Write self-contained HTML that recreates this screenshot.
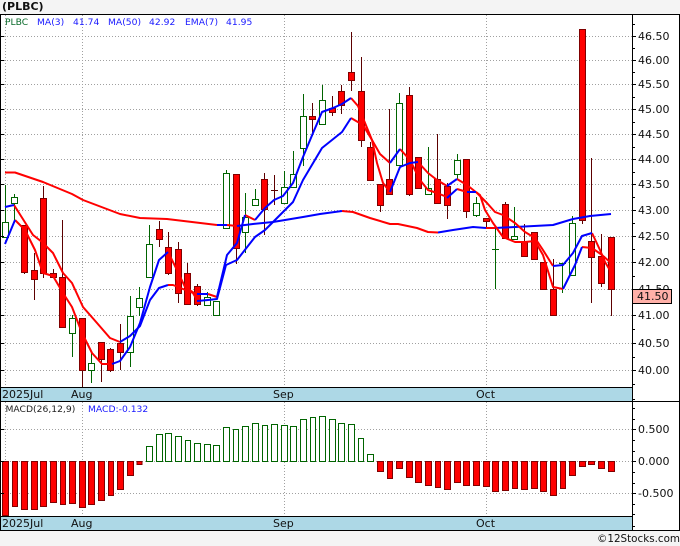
<!DOCTYPE html>
<html><head><meta charset="utf-8"><title>PLBC</title>
<style>
html,body{margin:0;padding:0;background:#f4f4f4;width:680px;height:546px;overflow:hidden}
svg{display:block}
text{font-family:"DejaVu Sans","Liberation Sans",sans-serif;font-size:11px;fill:#111}
.l{font-size:9.2px;fill:#1a1aff}
.g{fill:none;stroke:#a0a0a0;stroke-width:1;stroke-dasharray:1 2}
.w{fill:none;stroke-width:1}
.ln{fill:none;stroke-width:2;stroke-linejoin:round}
</style></head><body>
<svg width="680" height="546" viewBox="0 0 680 546" xmlns="http://www.w3.org/2000/svg">
<rect x="0" y="14" width="680" height="517" fill="#fff"/>
<text x="2" y="10" style="font-weight:bold;font-size:11px" fill="#000">(PLBC)</text>

<path class="g" d="M1 36.5H632M1 60.5H632M1 84.5H632M1 109.5H632M1 134.5H632M1 159.5H632M1 184.5H632M1 210.5H632M1 236.5H632M1 262.5H632M1 289.5H632M1 315.5H632M1 343.5H632M1 370.5H632M1 429.5H632M1 461.5H632M1 493.5H632M5.5 15V387M82.5 15V387M284.5 15V387M486.5 15V387M5.5 402V516M82.5 402V516M284.5 402V516M486.5 402V516"/>

<path class="w" stroke="#5c0000" d="M24.5 225V274M34.5 253V300M43.5 186V278M53.5 269V278M62.5 220V327M82.5 318V387M101.5 342V382M110.5 348V372M120.5 324V370M159.5 221V247M168.5 232V275M178.5 242V303M187.5 263V304M197.5 284V306M236.5 174V264M264.5 173V235M274.5 175V205M271 190.5H278M312.5 103V136M332.5 96V116M341.5 85V114M351.5 32V91M361.5 57V147M370.5 142V180M380.5 184V212M389.5 109V194M409.5 87V196M418.5 157V188M437.5 134V203M447.5 183V219M466.5 159V218M486.5 218V228M505.5 202V238M524.5 224V256M534.5 232V259M543.5 262V289M553.5 259V316M582.5 29V224M591.5 158V303M601.5 234V287M611.5 237V316"/>
<path class="w" stroke="#006400" d="M5.5 185V237M14.5 194V220M72.5 315V357M91.5 353V383M130.5 296V367M139.5 287V316M149.5 225V277M207.5 292V305M216.5 301V315M226.5 170V229M245.5 193V253M255.5 189V205M284.5 171V203M293.5 151V187M303.5 94V166M322.5 85V124M399.5 93V165M428.5 147V194M457.5 154V180M476.5 197V217M495.5 228V289M492 249.5H499M514.5 207V239M562.5 263V293M559 263.5H566M572.5 216V275"/>

<path fill="#ff0000" stroke="#800000" d="M21.5 225.5h6v47h-6zM31.5 270.5h6v9h-6zM40.5 198.5h6v75h-6zM50.5 273.5h6v4h-6zM59.5 277.5h6v50h-6zM79.5 318.5h6v52h-6zM98.5 342.5h6v17h-6zM107.5 349.5h6v21h-6zM117.5 343.5h6v9h-6zM156.5 229.5h6v10h-6zM165.5 247.5h6v26h-6zM175.5 249.5h6v44h-6zM184.5 273.5h6v31h-6zM194.5 286.5h6v18h-6zM233.5 174.5h6v74h-6zM261.5 179.5h6v30h-6zM309.5 116.5h6v3h-6zM329.5 108.5h6v4h-6zM338.5 91.5h6v14h-6zM348.5 72.5h6v8h-6zM358.5 91.5h6v49h-6zM367.5 147.5h6v33h-6zM377.5 184.5h6v21h-6zM386.5 179.5h6v15h-6zM406.5 95.5h6v99h-6zM415.5 157.5h6v31h-6zM434.5 179.5h6v24h-6zM444.5 186.5h6v19h-6zM463.5 159.5h6v52h-6zM483.5 218.5h6v3h-6zM502.5 204.5h6v34h-6zM521.5 242.5h6v14h-6zM531.5 232.5h6v27h-6zM540.5 262.5h6v27h-6zM550.5 289.5h6v26h-6zM579.5 29.5h6v191h-6zM588.5 241.5h6v16h-6zM598.5 256.5h6v27h-6zM608.5 237.5h6v52h-6z"/>
<path fill="#fff" stroke="#006400" d="M2.5 222.5h6v15h-6zM11.5 197.5h6v6h-6zM69.5 318.5h6v15h-6zM88.5 363.5h6v7h-6zM127.5 316.5h6v36h-6zM136.5 298.5h6v9h-6zM146.5 244.5h6v33h-6zM204.5 297.5h6v8h-6zM213.5 301.5h6v14h-6zM223.5 173.5h6v55h-6zM242.5 217.5h6v15h-6zM252.5 199.5h6v6h-6zM281.5 187.5h6v16h-6zM290.5 174.5h6v13h-6zM300.5 116.5h6v32h-6zM319.5 100.5h6v24h-6zM396.5 103.5h6v62h-6zM425.5 188.5h6v6h-6zM454.5 160.5h6v14h-6zM473.5 203.5h6v12h-6zM511.5 236.5h6v3h-6zM569.5 223.5h6v52h-6z"/>

<!-- MA50 -->
<path class="ln" stroke="#ff0000" d="M5 172.5L15 172.5 43 182 72 194 83 200 120 214 140 218 167 219 217 225M227 225L237 226M342 211L353 212 370 218 390 224 398 224 417 228 428 232 438 232.5M486 228L495 228"/>
<path class="ln" stroke="#0000ff" d="M217 225L227 225M237 226L253 224 273 222 303 217 320 214 342 211M438 232.5L453 230 473 227 486 228M495 228L553 225 573 219 590 216 611 214"/>
<!-- MA3 / EMA red -->
<path class="ln" stroke="#ff0000" d="M15 220L25 230 35 250 43 273 53 276 63 293 72 307 82 333 92 353 102 364 112 364M168 252L177 270 185 287 197 295M208 294L217 297M245 215L255 220M351 98L358 106 363 118 372 140 380 154 390 163M400 149L410 160 420 180 428 190 437 193 447 197M457 189L467 192M476 192L480 195 485 210 493 223 503 237 515 242 525 242 535 241 543 255 553 287 563 289M582 247L592 248 602 255 611 263"/>
<path class="ln" stroke="#ff0000" d="M14 205L33 235 42 242 53 253 63 273 72 283 83 307 97 323 110 338 120 342M168 285L173 285 193 293 197 300M351 118L363 125 372 140 377 163 383 183 390 192M418 162L428 173 437 180 447 186M457 179L467 185 477 193 487 203 495 212 503 215 515 223 525 232 535 238 543 250 553 266M592 233L600 250 605 262 611 272"/>
<!-- MA3 / EMA blue -->
<path class="ln" stroke="#0000ff" d="M5 244L15 220M112 364L120 361 130 347 140 323 150 287 159 260 168 252M197 294L208 294M217 297L227 255 237 243 245 215M255 220L265 208 274 200 283 196 293 183 303 157 313 133 322 112 333 108 342 104 351 98M390 163L400 149M447 198L457 189M467 192L476 192M563 289L575 265 582 247"/>
<path class="ln" stroke="#0000ff" d="M5 207L14 205M120 342L130 336 140 326 150 300 159 288 168 285M197 301L208 300 217 299 226 265 237 260 255 237 265 230 273 222 293 202 303 180 322 148 342 132 351 118M390 192L400 167 410 163 418 162M447 186L457 179M553 266L563 265 573 253 582 236 592 233"/>

<!-- MACD bars -->
<path fill="#ff0000" stroke="#800000" d="M2.5 461.5h6v54h-6zM12.5 461.5h5v45h-5zM21.5 461.5h6v48h-6zM31.5 461.5h6v48h-6zM40.5 461.5h6v45h-6zM50.5 461.5h6v41h-6zM60.5 461.5h5v43h-5zM69.5 461.5h6v42h-6zM79.5 461.5h6v46h-6zM88.5 461.5h6v43h-6zM98.5 461.5h6v39h-6zM108.5 461.5h5v34h-5zM117.5 461.5h6v28h-6zM127.5 461.5h6v14h-6zM137 461.5h5v3h-5zM377.5 461.5h6v10h-6zM387.5 461.5h5v17h-5zM396.5 461.5h6v7h-6zM406.5 461.5h6v16h-6zM415.5 461.5h6v21h-6zM425.5 461.5h6v24h-6zM435.5 461.5h5v26h-5zM444.5 461.5h6v28h-6zM454.5 461.5h6v21h-6zM463.5 461.5h6v24h-6zM473.5 461.5h6v24h-6zM483.5 461.5h6v25h-6zM492.5 461.5h6v30h-6zM502.5 461.5h6v29h-6zM512.5 461.5h5v27h-5zM521.5 461.5h6v28h-6zM531.5 461.5h6v27h-6zM540.5 461.5h6v30h-6zM550.5 461.5h6v34h-6zM560.5 461.5h5v27h-5zM569.5 461.5h6v14h-6zM579.5 461.5h6v5h-6zM588.5 461.5h6v3h-6zM598.5 461.5h6v7h-6zM608.5 461.5h6v10h-6z"/>
<path fill="#fff" stroke="#006400" d="M146.5 446.5h6v15h-6zM156.5 434.5h6v27h-6zM165.5 433.5h6v28h-6zM175.5 436.5h6v25h-6zM185.5 440.5h5v21h-5zM194.5 443.5h6v18h-6zM204.5 444.5h6v17h-6zM213.5 445.5h6v16h-6zM223.5 427.5h6v34h-6zM233.5 429.5h5v32h-5zM242.5 426.5h6v35h-6zM252.5 423.5h6v38h-6zM262.5 425.5h5v36h-5zM271.5 424.5h6v37h-6zM281.5 425.5h6v36h-6zM290.5 426.5h6v35h-6zM300.5 419.5h6v42h-6zM310.5 417.5h5v44h-5zM319.5 416.5h6v45h-6zM329.5 419.5h6v42h-6zM338.5 423.5h6v38h-6zM348.5 424.5h6v37h-6zM358.5 438.5h5v23h-5zM367.5 454.5h6v7h-6z"/>

<!-- Bands -->
<rect x="1" y="387.5" width="631" height="14" fill="#add8e6"/>
<rect x="1" y="516.5" width="631" height="14" fill="#add8e6"/>
<path stroke="#000" stroke-width="1" fill="none" d="M0 14.5H680M0 387.5H632M0 401.5H680M0 516.5H632M0 530.5H680M0.5 14V531M632.5 14V531M679.5 14V531"/>
<!-- ticks -->
<path stroke="#000" stroke-width="1" fill="none" d="M632 24.5h3M632 36.5h4M632 48.5h3M632 60.5h4M632 72.5h3M632 84.5h4M632 97.5h3M632 109.5h4M632 122.5h3M632 134.5h4M632 147.5h3M632 159.5h4M632 172.5h3M632 184.5h4M632 197.5h3M632 210.5h4M632 223.5h3M632 236.5h4M632 249.5h3M632 262.5h4M632 276.5h3M632 315.5h4M632 329.5h3M632 343.5h4M632 357.5h3M632 370.5h4M632 384.5h3M632 399.5h3M632 408.5h3M632 419.5h3M632 429.5h4M632 440.5h3M632 451.5h3M632 461.5h4M632 472.5h3M632 483.5h3M632 493.5h4M632 504.5h3M632 514.5h3M632 526.5h3M0 36.5h4M0 60.5h4M0 84.5h4M0 109.5h4M0 134.5h4M0 159.5h4M0 184.5h4M0 210.5h4M0 236.5h4M0 262.5h4M0 289.5h4M0 315.5h4M0 343.5h4M0 370.5h4M0 429.5h4M0 461.5h4M0 493.5h4"/>

<!-- Legend -->
<text x="5" y="25" class="l" style="fill:#0a6a2a">PLBC</text>
<text x="37" y="25" class="l">MA(3)</text>
<text x="73" y="25" class="l">41.74</text>
<text x="108" y="25" class="l">MA(50)</text>
<text x="149" y="25" class="l">42.92</text>
<text x="185" y="25" class="l">EMA(7)</text>
<text x="226" y="25" class="l">41.95</text>
<text x="5.5" y="412" class="l" style="fill:#222">MACD(26,12,9)</text>
<text x="88" y="412" class="l">MACD:-0.132</text>

<!-- Price axis -->
<text x="638" y="40">46.50</text>
<text x="638" y="64">46.00</text>
<text x="638" y="88">45.50</text>
<text x="638" y="113">45.00</text>
<text x="638" y="138">44.50</text>
<text x="638" y="163">44.00</text>
<text x="638" y="188">43.50</text>
<text x="638" y="214">43.00</text>
<text x="638" y="240">42.50</text>
<text x="638" y="266">42.00</text>
<text x="638" y="293">41.50</text>
<text x="638" y="319">41.00</text>
<text x="638" y="347">40.50</text>
<text x="638" y="374">40.00</text>
<text x="638" y="433">0.500</text>
<text x="638" y="465">0.000</text>
<text x="638" y="497">-0.500</text>

<rect x="632.5" y="289.5" width="39" height="14" fill="#ffb0a8" stroke="#000"/>
<text x="637" y="300">41.50</text>

<!-- Date labels -->
<text x="2" y="398">2025Jul</text>
<text x="71" y="398">Aug</text>
<text x="273" y="398">Sep</text>
<text x="476" y="398">Oct</text>
<text x="2" y="527">2025Jul</text>
<text x="71" y="527">Aug</text>
<text x="273" y="527">Sep</text>
<text x="476" y="527">Oct</text>

<text x="597" y="542" textLength="83" lengthAdjust="spacingAndGlyphs">©12Stocks.com</text>
</svg>
</body></html>
